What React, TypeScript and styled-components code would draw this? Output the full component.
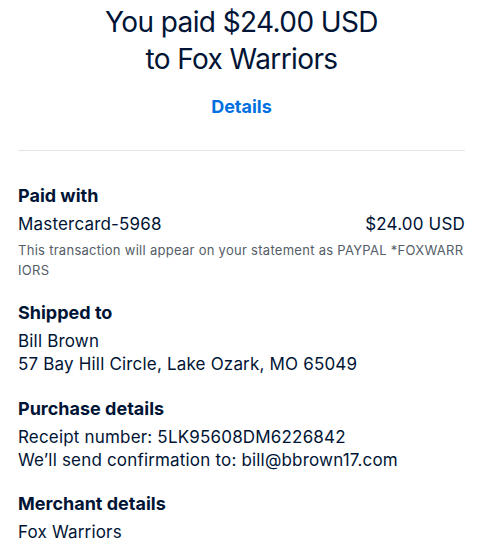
import React from "react";
import styled, { createGlobalStyle } from "styled-components";

const Global = createGlobalStyle`
  html, body { margin: 0; padding: 0; background: #fff; }
  body { font-family: "Inter", "Liberation Sans", sans-serif; color: #001435; }
`;

const Page = styled.div`
  padding: 0 18px 0 18px;
  display: flex;
  flex-direction: column;
`;

const Title = styled.h1`
  margin: 4px 0 0;
  font-size: 28px;
  line-height: 37px;
  font-weight: 400;
  text-align: center;
  color: #001435;
  letter-spacing: -0.6px;
`;

const DetailsLink = styled.a`
  display: block;
  margin-top: 17px;
  text-align: center;
  font-size: 18px;
  line-height: 24px;
  font-weight: 700;
  color: #0070e0;
  text-decoration: none;
`;

const Divider = styled.hr`
  margin: 31px 0 0;
  border: 0;
  border-top: 1px solid #e5e3dd;
`;

const Section = styled.section<{ $top: number }>`
  margin-top: ${(p) => p.$top}px;
  display: flex;
  flex-direction: column;
`;

const Heading = styled.h2`
  margin: 0 0 5px;
  font-size: 18px;
  line-height: 24px;
  font-weight: 700;
`;

const Line = styled.div`
  font-size: 17px;
  line-height: 23px;
  letter-spacing: 0.18px;
`;

const Row = styled(Line)`
  display: flex;
  justify-content: space-between;
`;

const Note = styled.div`
  margin-top: 4px;
  font-size: 13px;
  line-height: 20px;
  letter-spacing: 0.28px;
  color: #545d68;
  word-break: break-all;
`;

export default function App() {
  return (
    <>
      <Global />
      <Page>
        <Title>
          You paid $24.00 USD
          <br />
          to Fox Warriors
        </Title>
        <DetailsLink href="#">Details</DetailsLink>
        <Divider />
        <Section $top={33}>
          <Heading>Paid with</Heading>
          <Row>
            <span>Mastercard-5968</span>
            <span>$24.00 USD</span>
          </Row>
          <Note>
            This transaction will appear on your statement as PAYPAL *FOXWARRIORS
          </Note>
        </Section>
        <Section $top={21}>
          <Heading>Shipped to</Heading>
          <Line>Bill Brown</Line>
          <Line>57 Bay Hill Circle, Lake Ozark, MO 65049</Line>
        </Section>
        <Section $top={21}>
          <Heading>Purchase details</Heading>
          <Line>Receipt number: 5LK95608DM6226842</Line>
          <Line>We’ll send confirmation to: bill@bbrown17.com</Line>
        </Section>
        <Section $top={20}>
          <Heading>Merchant details</Heading>
          <Line>Fox Warriors</Line>
        </Section>
      </Page>
    </>
  );
}
